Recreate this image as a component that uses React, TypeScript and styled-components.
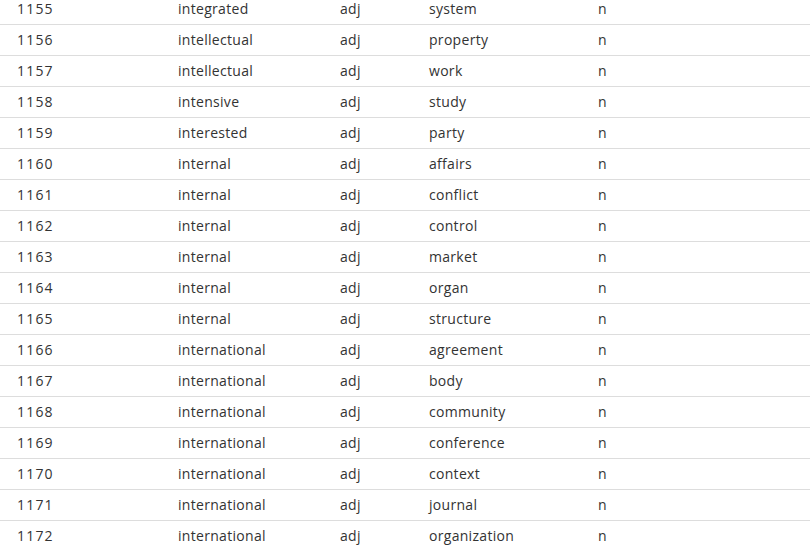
import React from "react";
import styled, { createGlobalStyle } from "styled-components";

const Global = createGlobalStyle`
  html, body { margin: 0; padding: 0; background: #fff; overflow: hidden; }
  body { font-family: "Open Sans", "Noto Sans", sans-serif; }
`;

const Table = styled.div`
  display: flex;
  flex-direction: column;
  margin-top: -6px;
  width: 810px;
`;

const Row = styled.div`
  display: grid;
  grid-template-columns: 161px 162px 89px 169px 1fr;
  align-items: center;
  height: 28px;
  padding: 0 0 2px 17px;
  border-bottom: 1px solid #dddddd;
  font-size: 14px;
  color: #333333;
  letter-spacing: 0.3px;
`;

const Cell = styled.div`
  white-space: nowrap;
`;

const NumCell = styled(Cell)`
  letter-spacing: 1.2px;
`;

const data: [number, string, string, string, string][] = [
  [1155, "integrated", "adj", "system", "n"],
  [1156, "intellectual", "adj", "property", "n"],
  [1157, "intellectual", "adj", "work", "n"],
  [1158, "intensive", "adj", "study", "n"],
  [1159, "interested", "adj", "party", "n"],
  [1160, "internal", "adj", "affairs", "n"],
  [1161, "internal", "adj", "conflict", "n"],
  [1162, "internal", "adj", "control", "n"],
  [1163, "internal", "adj", "market", "n"],
  [1164, "internal", "adj", "organ", "n"],
  [1165, "internal", "adj", "structure", "n"],
  [1166, "international", "adj", "agreement", "n"],
  [1167, "international", "adj", "body", "n"],
  [1168, "international", "adj", "community", "n"],
  [1169, "international", "adj", "conference", "n"],
  [1170, "international", "adj", "context", "n"],
  [1171, "international", "adj", "journal", "n"],
  [1172, "international", "adj", "organization", "n"],
];

export default function App() {
  return (
    <>
      <Global />
      <Table>
        {data.map(([num, w1, p1, w2, p2]) => (
          <Row key={num}>
            <NumCell>{num}</NumCell>
            <Cell>{w1}</Cell>
            <Cell>{p1}</Cell>
            <Cell>{w2}</Cell>
            <Cell>{p2}</Cell>
          </Row>
        ))}
      </Table>
    </>
  );
}
